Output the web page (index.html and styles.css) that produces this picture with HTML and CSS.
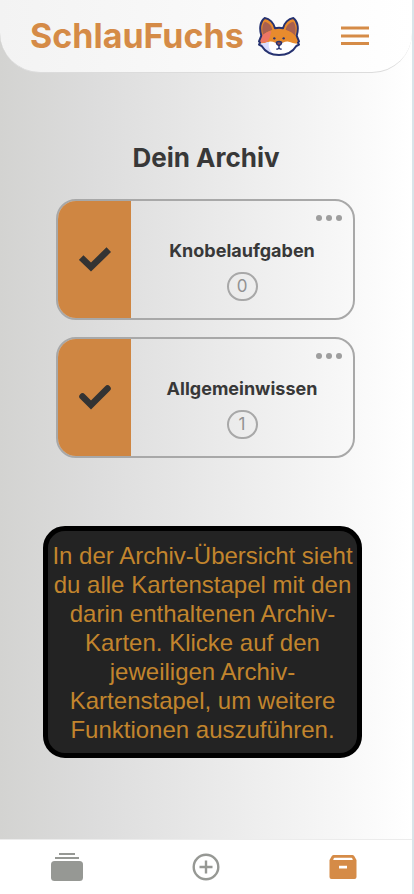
FILE: index.html
```html
<!DOCTYPE html>
<html lang="de">
<head>
<meta charset="utf-8">
<meta name="viewport" content="width=device-width, initial-scale=1">
<title>SchlauFuchs</title>
<link rel="stylesheet" href="styles.css">
</head>
<body>
<div class="app">
  <header class="header">
    <a class="brand" href="#">
      <span class="brand-name">SchlauFuchs</span>
      <svg class="fox" viewBox="0 0 126 117" aria-hidden="true">
        <path d="M10 56C3 33 7 12 20 3C35 5 47 18 51 34Q63 31 75 34C79 18 91 5 106 3C119 12 123 33 116 56L123 73L120 77L123 83L115 87C104 105 84 114 63 114S22 105 11 87L3 83L6 77L3 73Z" fill="#e88b2d"/>
        <path d="M14 48C11 32 14 20 21 14C33 17 41 27 43 38Q24 44 14 56ZM112 48C115 32 112 20 105 14C93 17 85 27 83 38Q102 44 112 56Z" fill="#a9604f"/>
        <path d="M10 58Q20 46 40 42C37 58 34 67 26 76L4 78Z" fill="#ed7564"/>
        <path d="M4 80C19 79 27 76 34 74C47 72 50 79 63 79S79 72 92 74C100 76 107 79 122 80L115 88C104 106 84 114 63 114S22 106 11 88Z" fill="#fff"/>
        <path d="M4 80Q21 79 34 74C29 87 35 101 46 111Q20 105 11 88Z" fill="#d9dcff"/>
        <path d="M10 56C3 33 7 12 20 3C35 5 47 18 51 34Q63 31 75 34C79 18 91 5 106 3C119 12 123 33 116 56L123 73L120 77L123 83L115 87C104 105 84 114 63 114S22 105 11 87L3 83L6 77L3 73Z" fill="none" stroke="#263270" stroke-width="6" stroke-linejoin="round"/>
        <circle cx="49" cy="64" r="3.500" fill="#263270"/><circle cx="77" cy="64" r="3.500" fill="#263270"/>
        <path d="M55 76Q63 71 71 76Q71 83 63 86Q55 83 55 76Z" fill="#964f4b" stroke="#263270" stroke-width="4"/>
        <path d="M63 85V91M55 96Q61 98 63 91Q65 98 71 96" fill="none" stroke="#263270" stroke-width="4"/>
      </svg>
    </a>
    <button class="menu" type="button" aria-label="Menü">
      <svg viewBox="0 0 28 20" aria-hidden="true"><path d="M0 2H28M0 10H28M0 17.500H28" stroke="currentColor" stroke-width="3"/></svg>
    </button>
  </header>

  <main class="main">
    <h1 class="title">Dein Archiv</h1>
    <div class="stacks">
      <article class="stack">
        <div class="stack-mark">
          <svg viewBox="0 0 32 25" aria-hidden="true"><path d="M2.200 10.500L12 20L29.800 2.700" fill="none" stroke="currentColor" stroke-width="6.500"/></svg>
        </div>
        <div class="stack-body">
          <button class="more" type="button" aria-label="Optionen für Knobelaufgaben">
            <svg viewBox="0 0 26 6" aria-hidden="true"><circle cx="3" cy="3" r="3"/><circle cx="13" cy="3" r="3"/><circle cx="23" cy="3" r="3"/></svg>
          </button>
          <h2 class="stack-name">Knobelaufgaben</h2>
          <span class="count">0</span>
        </div>
      </article>
      <article class="stack">
        <div class="stack-mark">
          <svg viewBox="0 0 32 25" aria-hidden="true"><path d="M3.500 11.500L12 20L28.500 3.500" fill="none" stroke="currentColor" stroke-width="6.500" stroke-linecap="round"/></svg>
        </div>
        <div class="stack-body">
          <button class="more" type="button" aria-label="Optionen für Allgemeinwissen">
            <svg viewBox="0 0 26 6" aria-hidden="true"><circle cx="3" cy="3" r="3"/><circle cx="13" cy="3" r="3"/><circle cx="23" cy="3" r="3"/></svg>
          </button>
          <h2 class="stack-name">Allgemeinwissen</h2>
          <span class="count">1</span>
        </div>
      </article>
    </div>
    <p class="hint">In der Archiv-Übersicht sieht du alle Kartenstapel mit den darin enthaltenen Archiv-Karten. Klicke auf den jeweiligen Archiv-Kartenstapel, um weitere Funktionen auszuführen.</p>
  </main>

  <nav class="tabs" aria-label="Hauptnavigation">
    <a class="tab" href="#" aria-label="Kartenstapel">
      <svg width="32" height="28" viewBox="0 0 32 28" aria-hidden="true"><rect y="8" width="32" height="20" rx="3.500"/><path d="M4 4H28V6H4ZM8 0H24V2H8Z"/></svg>
    </a>
    <a class="tab" href="#" aria-label="Neu">
      <svg width="28" height="28" viewBox="0 0 28 28" aria-hidden="true"><path d="M14 7.500V20.500M7.500 14H20.500" stroke="currentColor" stroke-width="2.400"/><circle cx="14" cy="14" r="12.300" fill="none" stroke="currentColor" stroke-width="2.400"/></svg>
    </a>
    <a class="tab tab-active" href="#" aria-label="Archiv" aria-current="page">
      <svg width="28" height="28" viewBox="0 0 28 28" aria-hidden="true"><path fill-rule="evenodd" d="M4.500 2H23.500Q25 2 25.500 3.500L27.500 7V24Q27.500 26 25.500 26H2.500Q0.500 26 0.500 24V7L2.500 3.500Q3 2 4.500 2ZM5.500 4.700Q4.700 4.700 4.200 7H23.800Q23.300 4.700 22.500 4.700ZM10 12.700V15.500H18V12.700Z"/></svg>
    </a>
  </nav>
</div>
</body>
</html>
```
FILE: styles.css
```css
* { box-sizing: border-box; }

body {
  margin: 0;
  background: #d9e4e9;
  color: #383838;
  font-family: Inter, "Liberation Sans", sans-serif;
}

button {
  padding: 0;
  border: 0;
  background: none;
  color: inherit;
}

svg { display: block; }

.app {
  display: flex;
  flex-direction: column;
  min-height: 100vh;
  margin-right: 2px;
  background: linear-gradient(90deg, #d3d3d1, #dcdcdc 22%, #ededed 60%, #fff);
}

.header {
  display: flex;
  align-items: center;
  justify-content: space-between;
  height: 73px;
  padding: 0 43px 0 30px;
  border-bottom: 1px solid #dcdcdc;
  border-radius: 0 0 40px 40px;
  background: linear-gradient(90deg, #f3f3f3, #fafafa 60%, #fff);
  color: #d58b47;
}

.brand {
  display: flex;
  align-items: center;
  gap: 14px;
  color: inherit;
  text-decoration: none;
}

.brand-name {
  font-size: 34px;
  font-weight: 700;
  line-height: 42px;
}

.fox { width: 42px; height: 39px; }

.menu svg { width: 28px; height: 20px; }

.main {
  display: flex;
  flex: 1;
  flex-direction: column;
  padding: 68px 43px 40px;
}

.title {
  margin: 0 0 24px;
  font-size: 26px;
  font-weight: 700;
  line-height: 34px;
  text-align: center;
}

.stacks {
  display: flex;
  flex-direction: column;
  gap: 17px;
  padding: 0 14px 0 13px;
}

.stack {
  display: flex;
  height: 121px;
  overflow: hidden;
  border: 2px solid #a8a8a8;
  border-radius: 20px;
}

.stack-mark {
  display: flex;
  flex: 0 0 73px;
  align-items: center;
  justify-content: center;
  background: #cf8642;
  color: #333;
}

.stack-mark svg { width: 32px; height: 25px; }

.stack-body {
  display: flex;
  flex: 1;
  flex-direction: column;
  align-items: center;
  padding: 14px 11px 0;
}

.more {
  align-self: flex-end;
  color: #9e9e9e;
}

.more svg {
  width: 26px;
  height: 6px;
  fill: currentColor;
}

.stack-name {
  margin: 18px 0 9px;
  font-size: 18px;
  font-weight: 700;
  line-height: 24px;
}

.count {
  width: 31px;
  border: 2px solid #a8a8a8;
  border-radius: 15px;
  color: #929292;
  font-size: 17px;
  line-height: 25px;
  text-align: center;
}

.hint {
  margin: 68px 7px 0 0;
  padding: 10px 2px 9px;
  border: 5px solid #000;
  border-radius: 22px;
  background: #232323;
  color: #c2852d;
  font-family: "Liberation Sans", Arial, sans-serif;
  font-size: 24px;
  line-height: 29px;
  text-align: center;
}

.tabs {
  display: flex;
  justify-content: space-between;
  height: 55px;
  padding: 0 55px 0 51px;
  border-top: 1px solid #ececec;
  background: #fff;
}

.tab {
  display: flex;
  align-items: center;
  color: #969894;
}

.tab svg { fill: currentColor; }

.tab-active { color: #d58b47; }
```
